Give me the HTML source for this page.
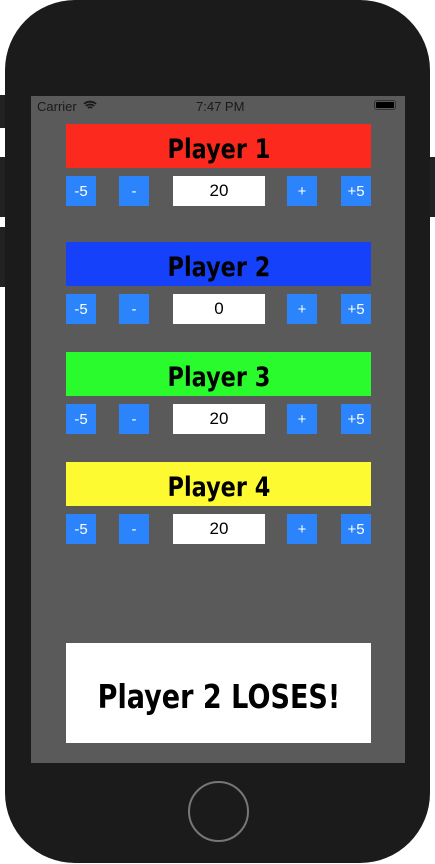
<!DOCTYPE html>
<html><head><meta charset="utf-8"><style>
*{margin:0;padding:0;box-sizing:border-box}
body{width:435px;height:864px;background:#fff;position:relative;overflow:hidden;font-family:"Liberation Sans",sans-serif}
.phone{position:absolute;left:5px;top:0;width:425px;height:863px;background:#1b1b1b;border-radius:70px}
.side{position:absolute;background:#222;width:6px}
.screen{position:absolute;left:31px;top:96px;width:374px;height:667px;background:#5a5a5a}
.bar{position:absolute;left:35px;width:305px;height:44px;display:flex;align-items:center;justify-content:center;color:#000}
.bar span{display:inline-block;font-family:"DejaVu Sans",sans-serif;font-weight:bold;font-size:27px;transform:scaleX(0.83);padding-top:6px}
.b{position:absolute;width:30px;height:30px;background:#2b84fb;color:#fff;font-size:15px;display:flex;align-items:center;justify-content:center}
.f{position:absolute;left:142px;width:92px;height:30px;background:#fff;color:#000;font-size:17px;display:flex;align-items:center;justify-content:center}
.status{position:absolute;top:0;left:0;width:374px;height:20px;font-size:13px;color:#1a1a1a}
.home{position:absolute;left:188px;top:781px;width:61px;height:61px;border:2px solid #777;border-radius:50%}
</style></head><body>
<div class="side" style="left:0;top:95px;height:33px"></div>
<div class="side" style="left:0;top:157px;height:60px"></div>
<div class="side" style="left:0;top:227px;height:60px"></div>
<div class="side" style="left:429px;top:157px;height:60px"></div>
<div class="phone"></div>
<div class="screen">
 <div class="status"><span style="position:absolute;left:6px;top:3px">Carrier</span>
  <svg style="position:absolute;left:52px;top:4px" width="14" height="10" viewBox="0 0 14 10"><path d="M1 4a9 9 0 0 1 12 0M3 6a6 6 0 0 1 8 0M5 8a3 3 0 0 1 4 0" stroke="#1a1a1a" stroke-width="1.8" fill="none"/></svg>
  <span style="position:absolute;left:165px;top:3px">7:47 PM</span>
  <div style="position:absolute;left:343px;top:4px;width:22px;height:10px;border:1px solid #333;border-radius:3px;padding:1px"><div style="background:#000;width:100%;height:100%;border-radius:1px"></div></div>
 </div>
 <div class="bar" style="top:28px;background:#fc2a1e"><span>Player 1</span></div>
 <div class="b" style="left:35px;top:80px">-5</div><div class="b" style="left:88px;top:80px">-</div><div class="f" style="top:80px">20</div><div class="b" style="left:256px;top:80px">+</div><div class="b" style="left:310px;top:80px">+5</div>
 <div class="bar" style="top:146px;background:#1541fb"><span>Player 2</span></div>
 <div class="b" style="left:35px;top:198px">-5</div><div class="b" style="left:88px;top:198px">-</div><div class="f" style="top:198px">0</div><div class="b" style="left:256px;top:198px">+</div><div class="b" style="left:310px;top:198px">+5</div>
 <div class="bar" style="top:256px;background:#29fb2d"><span>Player 3</span></div>
 <div class="b" style="left:35px;top:308px">-5</div><div class="b" style="left:88px;top:308px">-</div><div class="f" style="top:308px">20</div><div class="b" style="left:256px;top:308px">+</div><div class="b" style="left:310px;top:308px">+5</div>
 <div class="bar" style="top:366px;background:#fefa32"><span>Player 4</span></div>
 <div class="b" style="left:35px;top:418px">-5</div><div class="b" style="left:88px;top:418px">-</div><div class="f" style="top:418px">20</div><div class="b" style="left:256px;top:418px">+</div><div class="b" style="left:310px;top:418px">+5</div>
 <div class="bar" style="top:547px;height:100px;background:#fff"><span style="font-size:33px;transform:scaleX(0.82)">Player 2 LOSES!</span></div>
</div>
<div class="home"></div>
</body></html>
